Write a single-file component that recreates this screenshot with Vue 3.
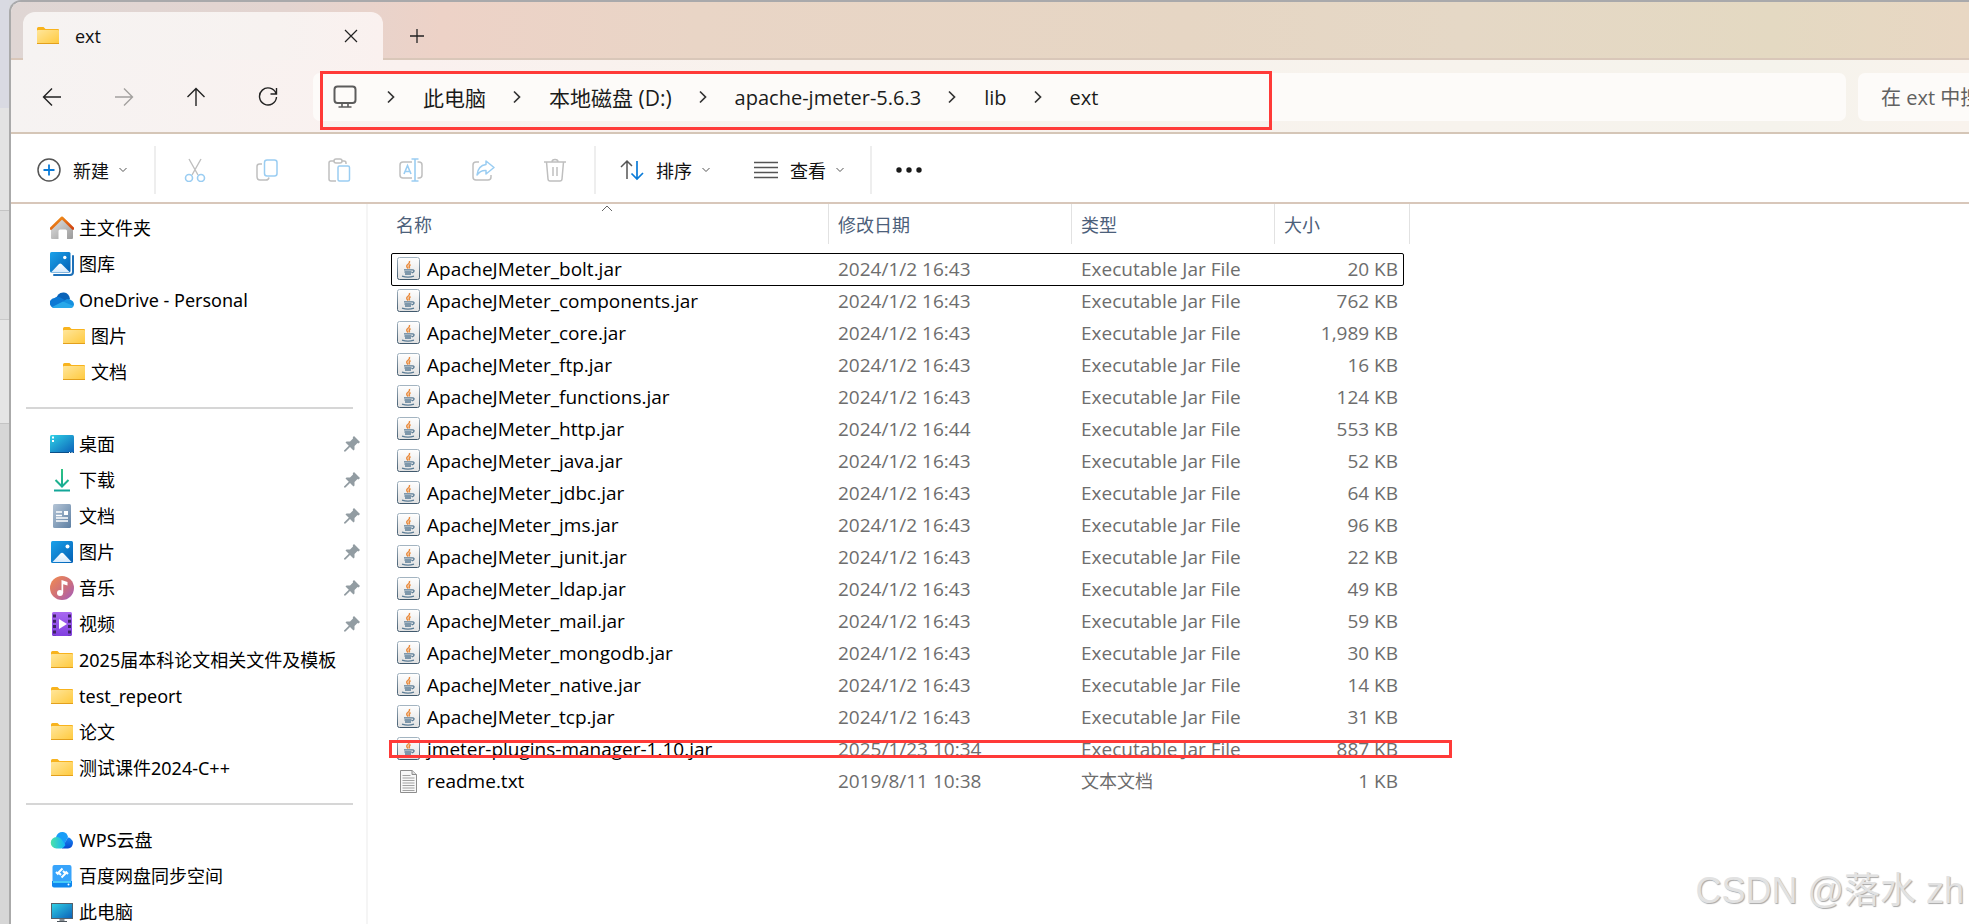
<script setup>
const crumbs = [
  { text: '此电脑', wide: true },
  { text: '本地磁盘 (D:)', wide: true },
  { text: 'apache-jmeter-5.6.3' },
  { text: 'lib' },
  { text: 'ext' },
]

const tools = [
  { icon: 'cut', label: '剪切' },
  { icon: 'copy', label: '复制' },
  { icon: 'paste', label: '粘贴' },
  { icon: 'rename', label: '重命名' },
  { icon: 'share', label: '共享' },
  { icon: 'trash', label: '删除' },
]

const sections = [
  [
    { icon: 'home', text: '主文件夹' },
    { icon: 'gallery', text: '图库' },
    { icon: 'onedrive', text: 'OneDrive - Personal' },
    { icon: 'folder', text: '图片', nested: true },
    { icon: 'folder', text: '文档', nested: true },
  ],
  [
    { icon: 'desktop', text: '桌面', pinned: true },
    { icon: 'download', text: '下载', pinned: true },
    { icon: 'document', text: '文档', pinned: true },
    { icon: 'picture', text: '图片', pinned: true },
    { icon: 'music', text: '音乐', pinned: true },
    { icon: 'video', text: '视频', pinned: true },
    { icon: 'folder', text: '2025届本科论文相关文件及模板' },
    { icon: 'folder', text: 'test_repeort' },
    { icon: 'folder', text: '论文' },
    { icon: 'folder', text: '测试课件2024-C++' },
  ],
  [
    { icon: 'wps', text: 'WPS云盘' },
    { icon: 'baidu', text: '百度网盘同步空间' },
    { icon: 'pc', text: '此电脑' },
  ],
]

const jar = (name, size, date = '2024/1/2 16:43') => ({ name, size, date, type: 'Executable Jar File', icon: 'jar' })
const files = [
  { ...jar('ApacheJMeter_bolt.jar', '20 KB'), focused: true },
  jar('ApacheJMeter_components.jar', '762 KB'),
  jar('ApacheJMeter_core.jar', '1,989 KB'),
  jar('ApacheJMeter_ftp.jar', '16 KB'),
  jar('ApacheJMeter_functions.jar', '124 KB'),
  jar('ApacheJMeter_http.jar', '553 KB', '2024/1/2 16:44'),
  jar('ApacheJMeter_java.jar', '52 KB'),
  jar('ApacheJMeter_jdbc.jar', '64 KB'),
  jar('ApacheJMeter_jms.jar', '96 KB'),
  jar('ApacheJMeter_junit.jar', '22 KB'),
  jar('ApacheJMeter_ldap.jar', '49 KB'),
  jar('ApacheJMeter_mail.jar', '59 KB'),
  jar('ApacheJMeter_mongodb.jar', '30 KB'),
  jar('ApacheJMeter_native.jar', '14 KB'),
  jar('ApacheJMeter_tcp.jar', '31 KB'),
  { ...jar('jmeter-plugins-manager-1.10.jar', '887 KB', '2025/1/23 10:34'), marked: true },
  { name: 'readme.txt', size: '1 KB', date: '2019/8/11 10:38', type: '文本文档', icon: 'txt', hanType: true },
]
</script>

<template>
  <div class="screen">
    <svg class="defs" aria-hidden="true">
      <defs>
        <linearGradient id="g-folder" x1="0" y1="0" x2="1" y2="1"><stop offset="0" stop-color="#ffe69b" /><stop offset="1" stop-color="#ffc93c" /></linearGradient>
        <linearGradient id="g-roof" x1="0" y1="0" x2="1" y2="1"><stop offset="0" stop-color="#f59a1b" /><stop offset="1" stop-color="#d1420f" /></linearGradient>
        <linearGradient id="g-wall" x1="0" y1="0" x2="1" y2="1"><stop offset="0" stop-color="#e2e2e2" /><stop offset="1" stop-color="#9a9a9a" /></linearGradient>
        <linearGradient id="g-blue" x1="0" y1="0" x2="1" y2="1"><stop offset="0" stop-color="#1ba2ea" /><stop offset="1" stop-color="#0460b4" /></linearGradient>
        <linearGradient id="g-desk" x1="0" y1="0" x2="1" y2="1"><stop offset="0" stop-color="#30d2e6" /><stop offset="1" stop-color="#0b5fb8" /></linearGradient>
        <linearGradient id="g-down" x1="0" y1="0" x2="0" y2="24" gradientUnits="userSpaceOnUse"><stop offset="0" stop-color="#2fc481" /><stop offset="1" stop-color="#12a59a" /></linearGradient>
        <linearGradient id="g-doc" x1="0" y1="0" x2="1" y2="1"><stop offset="0" stop-color="#b5c5d6" /><stop offset="1" stop-color="#5d7fa3" /></linearGradient>
        <linearGradient id="g-music" x1="0" y1="0" x2="1" y2="1"><stop offset="0" stop-color="#f38c4e" /><stop offset=".55" stop-color="#cd6f7c" /><stop offset="1" stop-color="#a05bc0" /></linearGradient>
        <linearGradient id="g-video" x1="0" y1="0" x2="0" y2="1"><stop offset="0" stop-color="#a868f0" /><stop offset="1" stop-color="#8140e0" /></linearGradient>
        <linearGradient id="g-mount" x1="0" y1="0" x2="0" y2="1"><stop offset="0" stop-color="#ffffff" /><stop offset="1" stop-color="#d5eafd" /></linearGradient>
        <linearGradient id="g-wps" x1="0" y1="0" x2="1" y2="0"><stop offset="0" stop-color="#4be3a8" /><stop offset="1" stop-color="#10b2fb" /></linearGradient>
        <linearGradient id="g-wpsd" x1="0" y1="0" x2="0" y2="1"><stop offset="0" stop-color="#1788f5" /><stop offset="1" stop-color="#0849cf" /></linearGradient>
        <linearGradient id="g-jar" x1="0" y1="0" x2="0" y2="1"><stop offset="0" stop-color="#ffffff" /><stop offset="1" stop-color="#e1e1e1" /></linearGradient>
        <linearGradient id="g-jarb" x1="0" y1="0" x2="0" y2="1"><stop offset="0" stop-color="#a3b4c1" /><stop offset="1" stop-color="#40596d" /></linearGradient>
      </defs>
      <symbol id="i-folder" viewBox="0 0 24 24">
        <path d="M1 4.500Q1 3 2.500 3H7.500L9.500 5H22Q23 5 23 6V8H1Z" fill="#f8b31d" />
        <rect x="1" y="6" width="22" height="14" rx="1" fill="url(#g-folder)" />
        <path d="M1 19.500H23" stroke="#e3a01c" />
      </symbol>
      <symbol id="i-home" viewBox="0 0 24 24">
        <path d="M1 13 12 3 23 13V22Q23 23 22 23H17V15Q17 13.500 15.500 13.500H10Q8.500 13.500 8.500 15V23H2Q1 23 1 22Z" fill="url(#g-wall)" />
        <path d="M1 12.500 12 1.800 23 12.500" fill="none" stroke="url(#g-roof)" stroke-width="2.600" stroke-linejoin="round" stroke-linecap="round" />
      </symbol>
      <symbol id="i-gallery" viewBox="0 0 24 24">
        <path d="M4 23H20Q23 23 23 20V4" fill="none" stroke="#1d70b8" stroke-width="2" stroke-linecap="round" />
        <rect width="20.500" height="20.500" rx="1.500" fill="url(#g-blue)" />
        <path d="M1.500 20 9 12Q10.200 11 11.500 12L19.500 20Z" fill="url(#g-mount)" /><circle cx="14.800" cy="5.500" r="1.700" fill="#fff" />
      </symbol>
      <symbol id="i-onedrive" viewBox="0 0 24 24">
        <path d="M6 12Q7 4 14 4.500 19 5 20 11L14 17H6Z" fill="#0a63b8" />
        <path d="M5 20A5 5 0 0 1 4.500 10Q8 7.500 12 10.500L18 14 8 20Z" fill="#0c78d4" />
        <path d="M13 14.500Q16 9.500 20 11.500 24 13 24 16.500 23.500 20 20 20H12Z" fill="#1590df" />
        <path d="M2 19 13 13.500 23.500 18Q22.500 20 20 20H5Q3 20 2 19Z" fill="#28a8ea" />
      </symbol>
      <symbol id="i-desktop" viewBox="0 0 24 24">
        <rect y="3" width="24" height="18" rx="1.500" fill="url(#g-desk)" /><path d="M0 20.500H24" stroke="#0b4f88" />
        <path d="M2 5.500H4M2 9H4" stroke="#fff" stroke-width="2" /><path d="M19 20.500H20M21.500 20.500H22.500" stroke="#fff" />
      </symbol>
      <symbol id="i-download" viewBox="0 0 24 24">
        <path d="M12 1V18M5.500 12 12 18.500 18.500 12M4 22.500H20" fill="none" stroke="url(#g-down)" stroke-width="2" />
      </symbol>
      <symbol id="i-document" viewBox="0 0 24 24">
        <rect x="3" width="18" height="24" rx="1.500" fill="url(#g-doc)" />
        <path d="M6 8H12M6 11.500H12M6 14H18M6 17H18" stroke="#fff" stroke-width="1.300" /><rect x="14" y="7" width="4" height="4" fill="#fff" />
      </symbol>
      <symbol id="i-picture" viewBox="0 0 24 24">
        <rect x="1" y="1" width="22" height="22" rx="1.500" fill="url(#g-blue)" />
        <path d="M2.500 22 10.500 13.500Q12 12.200 13.500 13.500L21.500 22Z" fill="url(#g-mount)" /><circle cx="17.500" cy="6.500" r="2" fill="#fff" />
      </symbol>
      <symbol id="i-music" viewBox="0 0 24 24">
        <circle cx="12" cy="12" r="12" fill="url(#g-music)" />
        <circle cx="10" cy="17" r="3" fill="#fff" /><path d="M11.500 17V4L17.500 6V9.500L13.200 8.200V17Z" fill="#fff" />
      </symbol>
      <symbol id="i-video" viewBox="0 0 24 24">
        <rect x="2" width="20" height="24" rx="1.500" fill="url(#g-video)" />
        <path d="M4.500 2.500V24M19.500 2.500V24" stroke="#3d2364" stroke-width="3" stroke-dasharray="3 2.300" /><path d="M9 7 17 12 9 17Z" fill="#fff" />
      </symbol>
      <symbol id="i-wps" viewBox="0 0 24 24">
        <path d="M6 9Q8 3.500 13 4 17 4.500 18 9L14 17H7Z" fill="#189df8" />
        <path d="M12 20 17 11Q18 8.500 20.500 10.500 23 12.500 23 15 22.500 20 18 20.500H12Z" fill="url(#g-wpsd)" />
        <path d="M6.500 20.500A5.700 5.700 0 0 1 6.500 9Q10 9 12 12L15.500 17Q13 20.500 11 20.500Z" fill="url(#g-wps)" />
      </symbol>
      <symbol id="i-baidu" viewBox="0 0 24 24">
        <rect x="2.500" y="1" width="19" height="20" rx="2" fill="#38a4fb" /><path d="M2 17H22V21.500Q22 23.500 20 23.500H4Q2 23.500 2 21.500Z" fill="#0f87ee" /><path d="M3 18H21" stroke="#5de0fa" stroke-width="1.500" />
        <path d="M12.500 4.500 8.500 8.500 11 11M11.500 13.500 15.500 9.500 13 7M6 8 8.500 10.500M15.500 7.500 18 10" fill="none" stroke="#fff" stroke-width="2" /><circle cx="18.500" cy="20.500" r="1" fill="#fff" />
      </symbol>
      <symbol id="i-pc" viewBox="0 0 24 24">
        <rect x="1.500" y="3.500" width="21" height="15" fill="url(#g-desk)" stroke="#56606a" /><path d="M9.500 19H14.500V21H9.500Z" fill="#858c92" /><path d="M7 21.500H17" stroke="#4d555c" />
      </symbol>
      <symbol id="i-pin" viewBox="0 0 16 16">
        <path d="M10 0 16 6 14.500 7.500 13.500 7 10.500 10V13.500L9.500 14.500 6 11 1.500 15.500H0V14.500L4.800 9.800 1.500 6.500 2.500 5.500H6L9 2.500 8.800 1.200Z" fill="#929ca2" />
      </symbol>
      <symbol id="i-jar" viewBox="0 0 24 24">
        <rect x="1.500" y=".500" width="22" height="22" rx="2" fill="url(#g-jar)" stroke="url(#g-jarb)" />
        <path d="M13.500 4Q14 6 11.800 7.500T12 11.500M14.500 7.500Q12.500 8.500 13.500 11.500" fill="none" stroke="#e98a3c" stroke-width="1.500" />
        <path d="M8 12.800H16.500M8.500 15H15.500M9 17H15M6 19.200Q12 21 18 19.200M16.500 12.800Q19 13 17.500 15L15.800 16" fill="none" stroke="#5b7c95" stroke-width="1.300" />
      </symbol>
      <symbol id="i-txt" viewBox="0 0 24 24">
        <path d="M4.500 1.500H16L20.500 5.500V23.500H4.500Z" fill="#f8f8f8" stroke="#8d8d8d" /><path d="M16 1.500V5.500H20.500" fill="#ddd" stroke="#8d8d8d" />
        <path d="M6.500 6.500H14.500M6.500 9H18.500M6.500 11.500H18.500M6.500 14H18.500M6.500 16.500H18.500M6.500 19H18.500M6.500 21.500H18.500" stroke="#a2a2a2" />
      </symbol>
      <symbol id="i-cut" viewBox="0 0 24 24">
        <path d="M6 1 15 17M18 1 9 17" fill="none" stroke="#bfbfbf" stroke-width="1.400" /><g fill="none" stroke="#9acdf2" stroke-width="1.600"><circle cx="6" cy="20" r="3.500" /><circle cx="18" cy="20" r="3.500" /></g>
      </symbol>
      <symbol id="i-copy" viewBox="0 0 24 24">
        <path d="M7 6H4.500Q2 6 2 8.500V18.500Q2 22 5 22H11Q13.500 22 14 19.500" fill="none" stroke="#bfbfbf" stroke-width="1.500" /><rect x="9.500" y="2" width="12.500" height="16" rx="2.500" fill="none" stroke="#9acdf2" stroke-width="1.500" />
      </symbol>
      <symbol id="i-paste" viewBox="0 0 24 24">
        <path d="M7 3H4Q2 3 2 5V21Q2 23 4 23H9M15 3H17Q19 3 19 5V6" fill="none" stroke="#bfbfbf" stroke-width="1.500" /><rect x="7" y="1" width="8" height="4" rx="2" fill="none" stroke="#bfbfbf" stroke-width="1.500" /><rect x="11" y="8" width="11.500" height="15" rx="1.500" fill="none" stroke="#9acdf2" stroke-width="1.500" />
      </symbol>
      <symbol id="i-rename" viewBox="0 0 24 24">
        <path d="M13 4H4Q1 4 1 7V17Q1 20 4 20H13M18.500 4H20Q23 4 23 7V17Q23 20 20 20H18.500" fill="none" stroke="#bfbfbf" stroke-width="1.500" /><path d="M5 16 8.500 7.500 12 16M6.300 13.500H10.700M16 1V23M12.500 1H19.500M12.500 23H19.500" fill="none" stroke="#9acdf2" stroke-width="1.600" />
      </symbol>
      <symbol id="i-share" viewBox="0 0 24 24">
        <path d="M8 4H5Q2 4 2 7V19Q2 22 5 22H17Q20 22 20 19V17" fill="none" stroke="#bfbfbf" stroke-width="1.500" /><path d="M15 3 23 9.500 15 16V12.500Q9.500 12 6 17 7 7.500 15 6.500Z" fill="none" stroke="#9acdf2" stroke-width="1.500" stroke-linejoin="round" />
      </symbol>
      <symbol id="i-trash" viewBox="0 0 24 24">
        <path d="M1 4H23M9 4Q9 1.500 12 1.500T15 4M3.500 4 5 21Q5.200 23 7 23H17Q18.800 23 19 21L20.500 4M10 9V18M14 9V18" fill="none" stroke="#bfbfbf" stroke-width="1.500" />
      </symbol>
      <symbol id="i-chev" viewBox="0 0 10 14"><path d="M2 1.500 7.500 7 2 12.500" fill="none" stroke="#333" stroke-width="1.700" /></symbol>
      <symbol id="i-down" viewBox="0 0 8 6"><path d="M.500 1 4 4.500 7.500 1" fill="none" stroke="#555" /></symbol>
    </svg>

    <div class="backdrop"></div>

    <div class="window">
      <header class="titlebar">
        <div class="tab">
          <svg class="i24"><use href="#i-folder" /></svg>
          <span class="tab-title">ext</span>
          <button class="plain" aria-label="关闭标签页">
            <svg width="14" height="14" viewBox="0 0 14 14"><path d="M1 1 13 13M13 1 1 13" stroke="#222" stroke-width="1.200" /></svg>
          </button>
        </div>
        <button class="plain add" aria-label="新建标签页">
          <svg width="16" height="16" viewBox="0 0 16 16"><path d="M8 1V15M1 8H15" stroke="#222" stroke-width="1.300" /></svg>
        </button>
      </header>

      <div class="navbar">
        <div class="nav-buttons">
          <button class="plain" aria-label="后退"><svg width="20" height="20" viewBox="0 0 20 20"><path d="M19 10H1.500M10 1.500 1.500 10 10 18.500" fill="none" stroke="#222" stroke-width="1.400" /></svg></button>
          <button class="plain" aria-label="前进" disabled><svg width="20" height="20" viewBox="0 0 20 20"><path d="M1 10H18.500M10 1.500 18.500 10 10 18.500" fill="none" stroke="#a3a09e" stroke-width="1.400" /></svg></button>
          <button class="plain" aria-label="向上"><svg width="20" height="20" viewBox="0 0 20 20"><path d="M10 19V1.500M1.500 10 10 1.500 18.500 10" fill="none" stroke="#222" stroke-width="1.400" /></svg></button>
          <button class="plain" aria-label="刷新"><svg width="20" height="20" viewBox="0 0 20 20"><path d="M18 6.500A8.500 8.500 0 1 0 18.500 10M18.500 1V7H12.500" fill="none" stroke="#222" stroke-width="1.400" /></svg></button>
        </div>
        <nav class="address" aria-label="地址">
          <svg class="monitor" width="24" height="24" viewBox="0 0 24 24"><rect x="1.500" y="1.500" width="21" height="16.500" rx="3" fill="none" stroke="#5c5c5c" stroke-width="2" /><path d="M9 18V22M15 18V22M5.500 22H18.500" stroke="#5c5c5c" stroke-width="1.600" /></svg>
          <ol>
            <li v-for="c in crumbs" :key="c.text">
              <svg width="10" height="14"><use href="#i-chev" /></svg>
              <button class="plain crumb" :class="{ wide: c.wide }">{{ c.text }}</button>
            </li>
          </ol>
          <div class="mark address-mark"></div>
        </nav>
        <input class="search" type="search" aria-label="搜索" placeholder="在 ext 中搜索" />
      </div>

      <div class="toolbar" role="toolbar" aria-label="命令">
        <button class="plain cmd new">
          <svg class="i24" viewBox="0 0 24 24"><circle cx="12" cy="12" r="11" fill="none" stroke="#555" stroke-width="1.500" /><path d="M12 6.500V17.500M6.500 12H17.500" stroke="#0a7bd8" stroke-width="1.800" /></svg>
          <span>新建</span><svg width="8" height="6"><use href="#i-down" /></svg>
        </button>
        <div class="tools">
          <button v-for="t in tools" :key="t.icon" class="plain" :aria-label="t.label" disabled><svg class="i24"><use :href="'#i-' + t.icon" /></svg></button>
        </div>
        <div class="views">
          <button class="plain cmd">
            <svg class="i24" viewBox="0 0 24 24"><path d="M7 21V3M1 9 7 3 12 8" fill="none" stroke="#555" stroke-width="1.500" /><path d="M17 3V21M11.500 15.500 17 21 23 15" fill="none" stroke="#0a7bd8" stroke-width="1.700" /></svg>
            <span>排序</span><svg width="8" height="6"><use href="#i-down" /></svg>
          </button>
          <button class="plain cmd">
            <svg class="i24" viewBox="0 0 24 24"><path d="M0 4.500H24M0 9.500H24M0 14.500H24M0 19.500H24" stroke="#555" stroke-width="1.400" /></svg>
            <span>查看</span><svg width="8" height="6"><use href="#i-down" /></svg>
          </button>
        </div>
        <button class="plain more" aria-label="更多"><svg width="26" height="6" viewBox="0 0 26 6" fill="#1a1a1a"><circle cx="3" cy="3" r="2.700" /><circle cx="13" cy="3" r="2.700" /><circle cx="23" cy="3" r="2.700" /></svg></button>
      </div>

      <div class="body">
        <nav class="sidebar" aria-label="导航窗格">
          <ul v-for="(s, n) in sections" :key="n">
            <li v-for="item in s" :key="item.text">
              <a href="#" :class="{ nested: item.nested }">
                <svg class="i24"><use :href="'#i-' + item.icon" /></svg>
                <span>{{ item.text }}</span>
                <svg v-if="item.pinned" class="pin"><use href="#i-pin" /></svg>
              </a>
            </li>
          </ul>
        </nav>

        <main>
          <table>
            <colgroup><col class="c-name" /><col class="c-date" /><col class="c-type" /><col class="c-size" /></colgroup>
            <thead>
              <tr>
                <th aria-sort="ascending">
                  <button class="plain">名称</button>
                  <svg class="caret" width="12" height="7" viewBox="0 0 12 7"><path d="M1 6 6 1 11 6" fill="none" stroke="#666" /></svg>
                </th>
                <th><button class="plain">修改日期</button></th>
                <th><button class="plain">类型</button></th>
                <th><button class="plain">大小</button></th>
              </tr>
            </thead>
            <tbody>
              <tr v-for="f in files" :key="f.name" :class="{ focused: f.focused, marked: f.marked }">
                <td class="name"><div><svg class="i24"><use :href="'#i-' + f.icon" /></svg>{{ f.name }}</div></td>
                <td>{{ f.date }}</td>
                <td :class="{ han: f.hanType }">{{ f.type }}</td>
                <td class="size">{{ f.size }}<div v-if="f.marked" class="mark row-mark"></div></td>
              </tr>
            </tbody>
          </table>
        </main>
      </div>
    </div>

    <div class="watermark">CSDN @落水 zh</div>
  </div>
</template>

<style>
body { margin: 0; }
</style>

<style scoped>
* { box-sizing: border-box; }
.screen {
  position: relative;
  display: flex;
  height: 100vh;
  overflow: hidden;
  background: #d9dae0;
  font-family: "Open Sans", "Noto Sans CJK SC", sans-serif;
  font-size: 18px;
  color: #000;
}
.defs { position: absolute; width: 0; height: 0; }
.plain {
  display: flex;
  align-items: center;
  padding: 0;
  border: 0;
  background: none;
  font: inherit;
  color: inherit;
  white-space: nowrap;
}
.i24 { flex: none; width: 24px; height: 24px; }
.backdrop {
  flex: none;
  width: 9px;
  background: linear-gradient(#d9dae2 0 108px, #e3e3e3 108px 210px, #c4c4c4 210px 211px, #dcdcdc 211px 319px, #c8c8c8 319px 320px, #e5e5e5 320px 423px, #c4c4c4 423px 424px, #d6d6d6 424px);
}
.window {
  flex: 1;
  min-width: 0;
  display: flex;
  flex-direction: column;
  border-top: 2px solid #a9a9ab;
  border-left: 2px solid #aaaaaa;
  border-top-left-radius: 12px;
  overflow: hidden;
  background: #fff;
}
.titlebar {
  flex: none;
  display: flex;
  align-items: flex-end;
  height: 58px;
  padding-left: 12px;
  background: linear-gradient(90deg, #dfd6d4, #e3d4d0 14%, #edd2c7 22%, #e9d5c6 35%, #e6d6c4 60%, #e5d8c6 74%, #e4d9c2 90%, #e8d7c3);
  box-shadow: inset 0 -2px #d9c7b9;
}
.tab {
  display: flex;
  align-items: center;
  width: 360px;
  height: 48px;
  padding: 0 25px 0 13px;
  border-radius: 12px 12px 0 0;
  background: linear-gradient(90deg, #f6f3f2, #f7f2f0 70%, #faf1ef);
}
.tab-title { flex: 1; padding-left: 15px; color: #111; }
.add { height: 48px; margin-left: 26px; }
.navbar {
  flex: none;
  display: flex;
  align-items: flex-start;
  height: 74px;
  padding-top: 13px;
  border-bottom: 2px solid #d5c6b7;
  background: linear-gradient(90deg, #f6f3f2, #faf1ef 20%, #f8f2ed 40%, #f7f3ed 75%, #f5f3ec 90%, #f9f3ed);
}
.nav-buttons { display: flex; gap: 52px; width: 302px; height: 48px; padding-left: 31px; }
.address {
  position: relative;
  flex: 1;
  display: flex;
  align-items: center;
  height: 48px;
  padding-left: 20px;
  border-radius: 7px;
  background: #fdfbf9;
}
.address ol { display: flex; margin: 0; padding: 0 0 0 3px; list-style: none; font-size: 20px; color: #1b1b1b; }
.address li { display: flex; align-items: center; padding-left: 26px; }
.monitor { flex: none; }
.crumb { padding-left: 27px; }
.crumb.wide { font-size: 21px; }
.mark { position: absolute; border: 3px solid #ff3a38; pointer-events: none; }
.address-mark { top: -2px; left: 7px; width: 952px; height: 59px; }
.search {
  width: 111px;
  height: 48px;
  margin-left: 12px;
  padding: 0 0 0 23px;
  border: 0;
  border-radius: 7px 0 0 7px;
  background: #fdfbf9;
  font: inherit;
  font-size: 20px;
}
.search::placeholder { color: #616161; opacity: 1; }
.search::-webkit-search-cancel-button { display: none; }
.toolbar {
  flex: none;
  display: flex;
  align-items: center;
  height: 70px;
  padding-top: 4px;
  border-bottom: 2px solid #d8c7ba;
}
.cmd { height: 48px; color: #111; }
.cmd span { padding: 0 10px 0 12px; }
.new { width: 143px; padding-left: 26px; }
.tools { display: flex; align-items: center; gap: 48px; height: 48px; width: 442px; padding-left: 27px; border: solid #eee; border-width: 0 2px; }
.views { display: flex; gap: 44px; height: 48px; width: 276px; padding-left: 24px; border-right: 2px solid #eee; }
.more { padding-left: 24px; }
.body { flex: 1; min-height: 0; display: flex; }
.sidebar {
  flex: none;
  width: 357px;
  padding: 6px 0;
  border-right: 2px solid #f5f5f5;
  overflow: hidden;
  font-family: "Noto Sans", "Noto Sans CJK SC", sans-serif;
}
.sidebar ul { margin: 0; padding: 0; list-style: none; }
.sidebar ul + ul::before {
  content: "";
  display: block;
  height: 2px;
  margin: 17px 13px 17px 15px;
  background: #d6d6d6;
}
.sidebar a {
  display: flex;
  align-items: center;
  gap: 5px;
  height: 36px;
  padding: 0 6px 0 39px;
  line-height: 24px;
  color: #000;
  text-decoration: none;
  white-space: nowrap;
}
.sidebar .nested { padding-left: 51px; }
.pin { width: 16px; height: 16px; margin-left: auto; }
main { flex: 1; min-width: 0; padding-left: 23px; overflow: hidden; }
table { width: 1019px; table-layout: fixed; border-collapse: collapse; }
.c-name { width: 438px; }
.c-date { width: 243px; }
.c-type { width: 203px; }
.c-size { width: 135px; }
th { position: relative; height: 49px; padding: 0; vertical-align: top; font-weight: 400; color: #4c607a; }
th .plain { width: 100%; height: 40px; padding-left: 9px; border-right: 1px solid #e2e2e2; }
th:first-child .plain { padding-left: 5px; }
.caret { position: absolute; top: 1px; left: 210px; }
td { height: 32px; padding: 0 0 0 9px; font-size: 19px; line-height: 24px; color: #6d6d6d; white-space: nowrap; }
td.han { font-size: 18px; }
tbody tr { position: relative; }
td.name { padding-left: 5px; color: #000; }
.name div { display: flex; align-items: center; gap: 7px; }
td.size { padding-right: 12px; text-align: right; }
.focused::after {
  content: "";
  position: absolute;
  inset: 0 6px -1px 0;
  border: 1px solid #000;
  border-radius: 2px;
}
.row-mark { top: 7px; left: -2px; right: -42px; height: 18px; }
.watermark {
  position: absolute;
  right: 5px;
  bottom: 8px;
  font-family: "Liberation Sans", "Noto Sans CJK SC", sans-serif;
  font-size: 36px;
  line-height: 50px;
  color: #e2e2e2;
  text-shadow: 1px 1px 1px #a8a8a8;
  white-space: nowrap;
}
</style>
